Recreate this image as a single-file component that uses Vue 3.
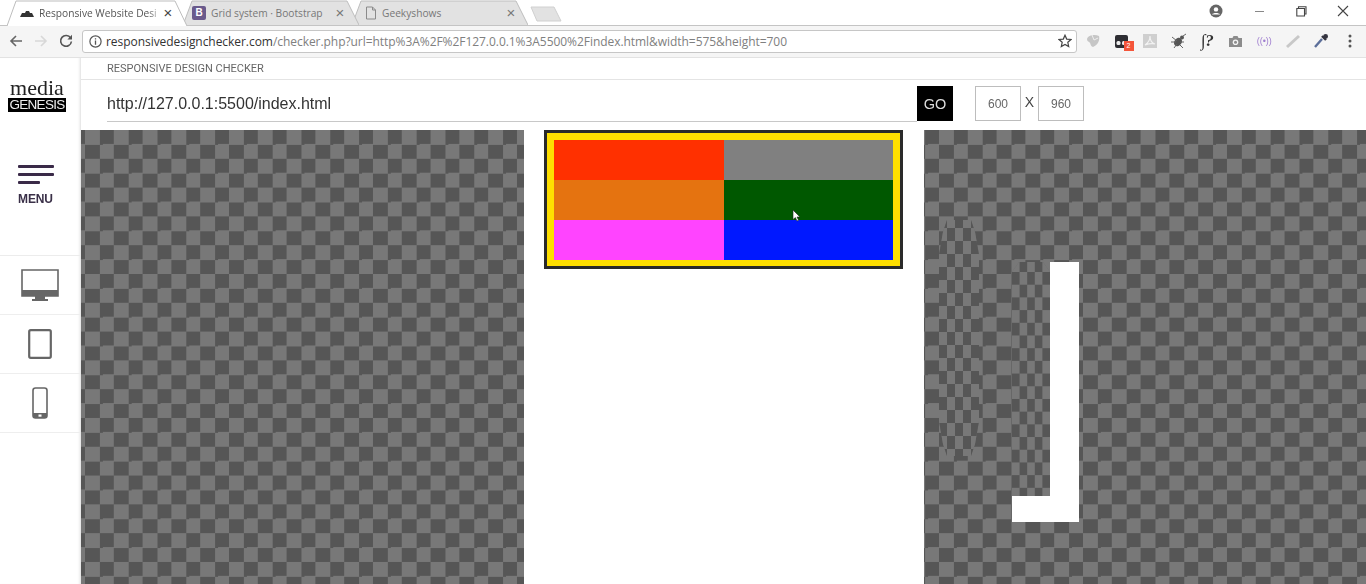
<script setup>
const rows = ['#ff3000', '#808080', '#e57310', '#005800', '#ff44ff', '#0018ff']
</script>

<template>
  <div class="screen">
    <!-- browser tabs -->
    <div class="tabstrip">
      <div class="tab tab-active">
        <svg class="tab-shape" viewBox="0 0 180 26" preserveAspectRatio="none"><path d="M0 26 L9 1 H168 L180 26" fill="#fff" stroke="#bdbdbd" /></svg>
        <svg class="fav" width="14" height="14" viewBox="0 0 14 14"><path d="M0 11 L2 7 L5 7 L6 5 L9 5 L10 7 L12 7 L14 11 Z" fill="#333" /></svg>
        <span class="tab-title tab-fade">Responsive Website Desi</span>
        <span class="tab-x dark">×</span>
      </div>
      <div class="tab tab-b">
        <svg class="tab-shape" viewBox="0 0 176 26" preserveAspectRatio="none"><path d="M0 25 L9 1 H164 L176 25" fill="#e2e2e2" stroke="#bdbdbd" /></svg>
        <span class="fav-b">B</span>
        <span class="tab-title grey">Grid system · Bootstrap</span>
        <span class="tab-x">×</span>
      </div>
      <div class="tab tab-c">
        <svg class="tab-shape" viewBox="0 0 176 26" preserveAspectRatio="none"><path d="M0 25 L9 1 H164 L176 25" fill="#e2e2e2" stroke="#bdbdbd" /></svg>
        <svg class="fav" width="12" height="14" viewBox="0 0 12 14"><path d="M1.5 1 H7.5 L10.5 4 V13 H1.5 Z M7.5 1 V4 H10.5" fill="none" stroke="#8a8a8a" /></svg>
        <span class="tab-title grey">Geekyshows</span>
        <span class="tab-x">×</span>
      </div>
      <svg class="newtab" width="32" height="16" viewBox="0 0 32 16"><path d="M1 1 H24 L31 15 H7 Z" fill="#e2e2e2" stroke="#d0d0d0" /></svg>
      <div class="winctl">
        <svg width="14" height="14" viewBox="0 0 14 14"><circle cx="7" cy="7" r="6.5" fill="#666" /><circle cx="7" cy="5.4" r="2.2" fill="#fff" /><path d="M3 10.6 C4 8.6 10 8.6 11 10.6 Z" fill="#fff" /></svg>
        <span class="win-min"></span>
        <svg class="win-max" width="11" height="11" viewBox="0 0 11 11"><path d="M2.5 2.5 V.8 H10 V8 H8.5 M.8 2.5 H8.5 V10 H.8 Z" fill="#fff" stroke="#444" stroke-width="1.1" /></svg>
        <svg class="win-x" width="12" height="12" viewBox="0 0 12 12"><path d="M1 1 L11 11 M11 1 L1 11" stroke="#444" stroke-width="1.1" /></svg>
      </div>
    </div>

    <!-- browser toolbar -->
    <div class="toolbar">
      <svg class="nav nav-back" width="14" height="14" viewBox="0 0 14 14"><path d="M13 7 H2 M7 2 L2 7 L7 12" fill="none" stroke="#666" stroke-width="1.6" /></svg>
      <svg class="nav nav-fwd" width="14" height="14" viewBox="0 0 14 14"><path d="M1 7 H12 M7 2 L12 7 L7 12" fill="none" stroke="#d8d8d8" stroke-width="1.6" /></svg>
      <svg class="nav nav-reload" width="14" height="14" viewBox="0 0 14 14"><path d="M11.6 4 A5.4 5.4 0 1 0 12.4 7.5" fill="none" stroke="#555" stroke-width="1.6" /><path d="M13 .8 V5.4 H8.4 Z" fill="#555" /></svg>
      <div class="omnibox">
        <svg width="13" height="13" viewBox="0 0 13 13"><circle cx="6.5" cy="6.5" r="5.6" fill="none" stroke="#555" stroke-width="1.2" /><path d="M6.5 5.6 V9.8 M6.5 3.2 V4.5" stroke="#555" stroke-width="1.3" /></svg>
        <span class="url"><b>responsivedesignchecker.com</b>/checker.php?url=http%3A%2F%2F127.0.0.1%3A5500%2Findex.html&amp;width=575&amp;height=700</span>
        <svg class="star" width="14" height="14" viewBox="0 0 14 14"><path d="M7 1.2 L8.7 5.1 L13 5.5 L9.8 8.3 L10.7 12.6 L7 10.4 L3.3 12.6 L4.2 8.3 L1 5.5 L5.3 5.1 Z" fill="none" stroke="#444" stroke-width="1.2" /></svg>
      </div>
      <div class="exts">
        <span class="ext"><svg width="16" height="16" viewBox="0 0 16 16"><path d="M2 6 C3 2 10 1 14 3 C15 7 13 12 8 14 C5 13 6 10 4 9 C3 8 2 8 2 6 Z" fill="#c6c6c6" /><path d="M7 2 L9 7 L13 5" fill="none" stroke="#eee" /></svg></span>
        <span class="ext ext-badged">
          <svg width="15" height="15" viewBox="0 0 15 15"><rect x="1" y="1" width="13" height="13" rx="2" fill="#2e2e33" /><rect x="2.5" y="7" width="4" height="4" rx="1.5" fill="#eee" /><rect x="8" y="7" width="4" height="4" rx="1.5" fill="#eee" /></svg>
          <span class="badge">2</span>
        </span>
        <span class="ext"><svg width="14" height="14" viewBox="0 0 14 14"><rect width="14" height="14" fill="#cfcfcf" /><path d="M2 11 C5 9 7 6 7 2 C7 6 9 9 12 10 C8 9 5 10 2 11 Z" fill="none" stroke="#f2f2f2" stroke-width="1.2" /></svg></span>
        <span class="ext"><svg width="18" height="16" viewBox="0 0 18 16"><ellipse cx="8" cy="9" rx="3.6" ry="4.6" transform="rotate(40 8 9)" fill="#555" /><circle cx="12" cy="4.6" r="2" fill="#555" /><path d="M2 4 L7 8 M1 9 H6 M4 15 L7 11 M10 9 L14 9 M10 12 L13 15 M13 3 L16 1" stroke="#666" /></svg></span>
        <span class="ext ext-fx">∫?</span>
        <span class="ext"><svg width="15" height="13" viewBox="0 0 15 13"><path d="M1 3 H4.5 L5.5 1 H9.5 L10.5 3 H14 V12 H1 Z" fill="#8c8c8c" /><circle cx="7.5" cy="7.2" r="2.8" fill="#f4f4f4" /><circle cx="7.5" cy="7.2" r="1.5" fill="#8c8c8c" /></svg></span>
        <span class="ext ext-signal">((•))</span>
        <span class="ext"><svg width="16" height="16" viewBox="0 0 16 16"><path d="M2 14 L14 3" stroke="#c8c8c8" stroke-width="3" /></svg></span>
        <span class="ext"><svg width="16" height="16" viewBox="0 0 16 16"><path d="M2 14 L9 6" stroke="#5c6f9a" stroke-width="2.4" /><path d="M9 3 L13 7" stroke="#33333f" stroke-width="2.4" /><circle cx="12.6" cy="3.4" r="2.4" fill="#33333f" /></svg></span>
        <span class="ext"><svg width="4" height="14" viewBox="0 0 4 14"><circle cx="2" cy="2" r="1.5" fill="#555" /><circle cx="2" cy="7" r="1.5" fill="#555" /><circle cx="2" cy="12" r="1.5" fill="#555" /></svg></span>
      </div>
    </div>

    <!-- page -->
    <div class="page">
      <aside class="sidebar">
        <div class="logo">
          <div class="logo-top">media</div>
          <div class="logo-bottom">GENESIS</div>
        </div>
        <div class="menu">
          <span class="bar"></span>
          <span class="bar"></span>
          <span class="bar bar-short"></span>
          <span class="menu-label">MENU</span>
        </div>
        <div class="device">
          <svg width="38" height="32" viewBox="0 0 38 32"><path d="M1 1 H37 V27 H1 Z" fill="#fff" stroke="#666" stroke-width="1.6" /><rect x="1" y="21" width="36" height="6" fill="#666" /><path d="M14 27 H24 V30 H27 V32 H11 V30 H14 Z" fill="#666" /></svg>
        </div>
        <div class="device">
          <svg width="24" height="30" viewBox="0 0 24 30"><rect x="1.2" y="1.2" width="21.6" height="27.6" rx="1.5" fill="#fff" stroke="#666" stroke-width="2.2" /></svg>
        </div>
        <div class="device">
          <svg width="16" height="32" viewBox="0 0 16 32"><rect x="1" y="1" width="14" height="30" rx="2.5" fill="#fff" stroke="#666" stroke-width="1.6" /><rect x="1" y="26" width="14" height="5" fill="#666" /><rect x="6.5" y="27.5" width="3" height="2.2" fill="#fff" /></svg>
        </div>
      </aside>

      <main class="content">
        <div class="title">RESPONSIVE DESIGN CHECKER</div>
        <div class="address">
          <div class="address-input">http://127.0.0.1:5500/index.html</div>
          <button class="go">GO</button>
          <div class="size">600</div>
          <span class="times">X</span>
          <div class="size">960</div>
        </div>

        <div class="stage">
          <div class="checker checker-left"></div>
          <div class="preview">
            <div class="frame">
              <div class="grid">
                <div v-for="c in rows" :key="c" :style="{ background: c }"></div>
              </div>
            </div>
            <svg class="cursor" width="9" height="13" viewBox="0 0 9 13"><path d="M1 1 V10.5 L3.4 8.6 L5 12 L6.6 11.2 L5 8 H8 Z" fill="#fff" stroke="#222" stroke-width=".6" /></svg>
          </div>
          <div class="checker checker-right">
            <div class="ghost ghost-one"></div>
            <div class="ghost ghost-two"></div>
            <div class="white-side"></div>
            <div class="white-foot"></div>
          </div>
        </div>
      </main>
    </div>
  </div>
</template>

<style>
html, body { margin: 0; background: #fff; overflow: hidden; }
</style>

<style scoped>
.screen {
  width: 1366px;
  height: 584px;
  overflow: hidden;
  display: flex;
  flex-direction: column;
  font-family: "Liberation Sans", Arial, sans-serif;
  color: #333;
  filter: blur(0.35px);
}

.tabstrip {
  height: 26px;
  flex: none;
  box-sizing: border-box;
  border-bottom: 1px solid #c4c4c4;
  display: flex;
  padding-left: 7px;
  background: #fff;
}
.tab {
  position: relative;
  height: 26px;
  box-sizing: border-box;
  display: flex;
  align-items: center;
  font-family: "Open Sans", sans-serif;
  font-size: 10.2px;
  flex: none;
}
.tab-shape {
  position: absolute;
  left: 0;
  top: 0;
  width: 100%;
  height: 100%;
}
.tab > *:not(.tab-shape) { position: relative; }
.tab-active { width: 180px; padding-left: 13px; z-index: 2; }
.tab-b { width: 176px; margin-left: -4px; padding-left: 9px; z-index: 1; }
.tab-c { width: 176px; margin-left: -7px; padding-left: 13px; }
.tab-active .tab-x { margin-right: 14px; }
.tab-b .tab-x { margin-right: 14px; }
.tab-c .tab-x { margin-right: 12px; }
.fav { flex: none; }
.fav-b {
  width: 14px;
  height: 14px;
  border-radius: 2px;
  background: #6a5a8c;
  color: #fff;
  font: bold 10px/14px "Liberation Sans", sans-serif;
  text-align: center;
  flex: none;
}
.tab-title {
  margin-left: 5px;
  white-space: nowrap;
  color: #555;
  flex: 1;
  overflow: hidden;
}
.tab-fade {
  -webkit-mask-image: linear-gradient(90deg, #000 88%, transparent);
  mask-image: linear-gradient(90deg, #000 88%, transparent);
}
.tab-title.grey { color: #777; }
.tab-x {
  font: 15px/14px "Liberation Sans", sans-serif;
  color: #777;
  width: 10px;
  text-align: center;
  flex: none;
}
.tab-x.dark { color: #444; }
.newtab { margin: 6px 0 0 2px; flex: none; }

.winctl {
  margin-left: auto;
  display: flex;
  align-items: center;
  height: 22px;
  padding-right: 17px;
}
.win-min {
  width: 9px;
  height: 1px;
  background: #888;
  margin-left: 32px;
}
.win-max { margin-left: 32px; }
.win-x { margin-left: 30px; }

.toolbar {
  height: 32px;
  flex: none;
  box-sizing: border-box;
  border-bottom: 1px solid #e2e2e2;
  background: #f5f5f5;
  display: flex;
  align-items: center;
  padding: 0 4px 1px 9px;
}
.nav { flex: none; }
.nav-fwd { margin-left: 11px; }
.nav-reload { margin-left: 11px; }
.omnibox {
  margin-left: 9px;
  width: 995px;
  height: 23px;
  flex: none;
  box-sizing: border-box;
  border: 1px solid #c6c6c6;
  border-radius: 3px;
  background: #fff;
  display: flex;
  align-items: center;
  padding: 0 4px 0 6px;
}
.url {
  margin-left: 4px;
  font-family: "Open Sans", sans-serif;
  font-size: 12px;
  letter-spacing: -0.05px;
  white-space: nowrap;
  color: #808080;
  flex: 1;
}
.url b { font-weight: 400; color: #333; }
.exts {
  display: flex;
  margin-left: 2px;
  align-items: center;
}
.ext {
  width: 28.5px;
  display: flex;
  align-items: center;
  justify-content: center;
  position: relative;
}
.ext-fx {
  font: italic bold 17px/16px "Liberation Serif", serif;
  color: #333;
}
.ext-signal {
  font-size: 9px;
  color: #a07fd0;
}
.badge {
  position: absolute;
  left: 16px;
  top: 7px;
  width: 10px;
  height: 10px;
  background: #f4553a;
  color: #fff;
  font-size: 7px;
  line-height: 10px;
  text-align: center;
}

.page {
  flex: 1;
  display: flex;
  min-height: 0;
}
.sidebar {
  width: 81px;
  flex: none;
  box-sizing: border-box;
  padding-right: 1px;
  box-shadow: inset -3px 0 3px -2px #dcdcdc;
  display: flex;
  flex-direction: column;
}
.logo {
  height: 72px;
  box-sizing: border-box;
  padding: 19px 0 0 8px;
  text-align: center;
}
.logo-top {
  font: 22px/21px "Liberation Serif", serif;
  color: #222;
  width: 58px;
}
.logo-bottom {
  width: 58px;
  height: 14px;
  background: #000;
  color: #eee;
  font: 13.5px/14px "Liberation Sans", sans-serif;
  letter-spacing: -0.7px;
}
.menu {
  height: 126px;
  box-sizing: border-box;
  padding: 35px 0 0 18px;
  display: flex;
  flex-direction: column;
  border-bottom: 1px solid #ececec;
}
.bar {
  width: 36px;
  height: 3px;
  border-radius: 1px;
  background: #3a2a48;
  margin-bottom: 5px;
}
.bar-short { width: 22px; }
.menu-label {
  margin-top: 3px;
  font-size: 12px;
  font-weight: bold;
  color: #3a3048;
  letter-spacing: -0.1px;
}
.device {
  height: 59px;
  box-sizing: border-box;
  border-bottom: 1px solid #eeeeee;
  display: flex;
  align-items: center;
  justify-content: center;
}

.content {
  flex: 1;
  min-width: 0;
  display: flex;
  flex-direction: column;
}
.title {
  height: 22px;
  flex: none;
  box-sizing: border-box;
  border-bottom: 1px solid #e4e4e4;
  padding: 4px 0 0 26px;
  font-family: Roboto, sans-serif;
  font-size: 11px;
  line-height: 14px;
  color: #666;
}
.address {
  height: 50px;
  flex: none;
  box-sizing: border-box;
  padding: 6px 0 0 26px;
  display: flex;
  align-items: flex-start;
}
.address-input {
  width: 810px;
  height: 36px;
  box-sizing: border-box;
  border-bottom: 1px solid #c8c8c8;
  font-size: 16px;
  line-height: 35px;
  color: #333;
}
.go {
  width: 36px;
  height: 35px;
  border: 0;
  padding: 0;
  background: #000;
  color: #ddd;
  font: 14.5px "Liberation Sans", sans-serif;
}
.size {
  width: 46px;
  height: 35px;
  box-sizing: border-box;
  border: 1px solid #bdbdbd;
  font-size: 12px;
  line-height: 34px;
  text-align: center;
  color: #666;
  margin-left: 22px;
}
.times {
  width: 17px;
  font-size: 14px;
  line-height: 33px;
  text-align: center;
  color: #444;
}
.times + .size { margin-left: 0; }

.stage {
  flex: 1;
  display: flex;
  min-height: 0;
}
.checker {
  background-color: #777;
  background-image: conic-gradient(#565656 25%, #787878 0 50%, #565656 0 75%, #787878 0);
  background-size: 28.8px 28.8px;
  position: relative;
}
.checker-left {
  width: 443px;
  background-position: 4px 0;
}
.checker-right {
  flex: 1;
  background-position: 15px 0;
}
.preview {
  width: 400px;
  position: relative;
}
.frame {
  width: 359px;
  box-sizing: border-box;
  margin-left: 20px;
  border: 3px solid #2a2a2a;
  background: #ffdf00;
  padding: 7px 7px 6px;
}
.grid {
  display: grid;
  grid-template-columns: 1fr 1fr;
  grid-auto-rows: 40px;
}
.cursor {
  position: absolute;
  left: 268px;
  top: 79px;
}
.ghost {
  position: absolute;
  background-color: #6a6a6a;
  background-image: conic-gradient(#565656 25%, #787878 0 50%, #565656 0 75%, #787878 0);
}
.ghost-one {
  left: 15px;
  top: 90px;
  width: 40px;
  height: 236px;
  background-size: 16px 26px;
  background-position: 0 8px;
  clip-path: polygon(8px 0, 32px 0, 36px 12px, 40px 35px, 40px 201px, 36px 224px, 32px 236px, 8px 236px, 4px 224px, 0 201px, 0 35px, 4px 12px);
}
.ghost-two {
  left: 88px;
  top: 132px;
  width: 38px;
  height: 234px;
  background-size: 15.2px 25.4px;
  background-position: 0 -2.7px;
  clip-path: polygon(7px 0, 31px 0, 38px 10px, 38px 234px, 0 234px, 0 10px);
}
.white-side {
  position: absolute;
  left: 126px;
  top: 132px;
  width: 29px;
  height: 260px;
  background: #fff;
}
.white-foot {
  position: absolute;
  left: 88px;
  top: 366px;
  width: 67px;
  height: 26px;
  background: #fff;
}
</style>
